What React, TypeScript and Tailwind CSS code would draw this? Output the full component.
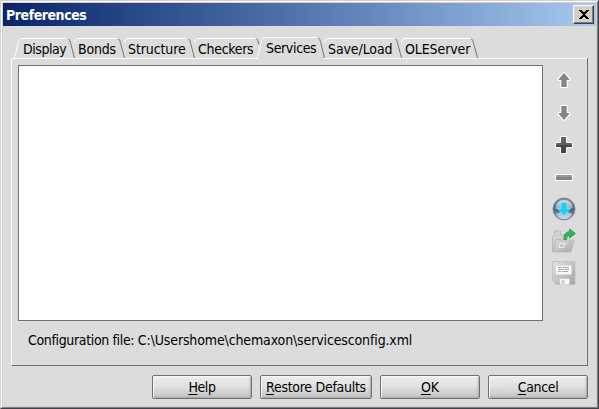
import React from "react";

type Tab = { label: string; width: string; tracking: string; size: number };

const tabs: Tab[] = [
  { label: "Display", width: "w-[55px]", tracking: "tracking-[-0.45px]", size: 55 },
  { label: "Bonds", width: "w-[50px]", tracking: "tracking-[-0.2px]", size: 50 },
  { label: "Structure", width: "w-[70px]", tracking: "tracking-[-0.1px]", size: 70 },
  { label: "Checkers", width: "w-[68px]", tracking: "tracking-[-0.3px]", size: 68 },
  { label: "Services", width: "w-[62px]", tracking: "tracking-[-0.35px]", size: 62 },
  { label: "Save/Load", width: "w-[77px]", tracking: "tracking-[-0.1px]", size: 77 },
  { label: "OLEServer", width: "w-[76px]", tracking: "tracking-[-0.1px]", size: 76 },
];

function TabItem({ tab, index }: { tab: Tab; index: number }) {
  const active = tab.label === "Services";
  const slopedLeft = index === 0 || active;
  const nextIsActive = tabs[index + 1]?.label === "Services";
  const w = tab.size;
  const top = active ? 0.5 : 1.5;
  return (
    <button className={`relative h-[22px] shrink-0 text-left ${tab.width}`}>
      <svg className="absolute left-0 top-0 overflow-visible" width={w} height="22" fill="none">
        <path
          d={
            slopedLeft
              ? `M-.5 21 L.5 17 L3.5 ${top + 3} Q4.5 ${top} 7 ${top} H${w - 2}`
              : `M4.5 ${top + 4} Q5 ${top} 8 ${top} H${w - 2}`
          }
          stroke="#fff"
        />
        <path
          d={
            nextIsActive
              ? `M${w - 2} ${top} Q${w} ${top + 1} ${w + 1} ${top + 6}`
              : `M${w - 2} ${top} Q${w} ${top + 1} ${w + 0.7} ${top + 5} L${w + 4.5} 21`
          }
          stroke="#747474"
        />
      </svg>
      <span className={`relative block whitespace-nowrap pl-2 leading-[22px] ${active ? "pt-0" : "pt-px"} ${tab.tracking}`}>{tab.label}</span>
    </button>
  );
}

function ArrowIcon({ down = false }: { down?: boolean }) {
  return (
    <svg width="14" height="18" viewBox="0 0 14 18" className={down ? "rotate-180" : ""}>
      <path d="M7 1.2 L12.8 7.8 V9.5 H10.2 V16.5 H3.8 V9.5 H1.2 V7.8 Z" fill="#858585" stroke="#fff" strokeWidth="1.1" />
    </svg>
  );
}

function PlusIcon() {
  return (
    <svg width="18" height="18" viewBox="0 0 18 18">
      <path d="M5.5 .5 H11.5 V6.5 H17.5 V11.5 H11.5 V17.5 H5.5 V11.5 H.5 V6.5 H5.5 Z" fill="#484848" stroke="#fff" />
      <path d="M6 1 H11 V7 H17 V9 H1 V7 H6 Z" fill="#626262" />
    </svg>
  );
}

function MinusIcon() {
  return (
    <svg width="18" height="7" viewBox="0 0 18 7">
      <rect x=".5" y=".5" width="17" height="6" fill="#858585" stroke="#fff" />
      <path d="M1 1 H17 V3 H1 Z" fill="#999" />
    </svg>
  );
}

function DownloadIcon() {
  return (
    <svg width="24" height="24" viewBox="0 0 24 24">
      <defs>
        <linearGradient id="orb" x1="0" y1="0" x2="0" y2="1">
          <stop offset="0" stopColor="#8592a0" />
          <stop offset=".55" stopColor="#4c6580" />
          <stop offset="1" stopColor="#a9c6d6" />
        </linearGradient>
        <linearGradient id="shine" x1="0" y1="0" x2="0" y2="1">
          <stop offset="0" stopColor="#fff" stopOpacity=".7" />
          <stop offset="1" stopColor="#e4edf4" stopOpacity=".45" />
        </linearGradient>
      </defs>
      <circle cx="12" cy="12" r="11" fill="url(#orb)" stroke="#7c8792" />
      <path d="M3.5 12 Q4 3 12 3 T20.5 11 Q12 14 3.5 12" fill="url(#shine)" />
      <path d="M4 17 Q12 12 20 17 Q17 22 12 22 T4 17" fill="#d9edf5" fillOpacity=".6" />
      <path d="M9 5.5 H15 V11.5 H18.5 L12 18.5 L5.5 11.5 H9 Z" fill="#1fcdf7" stroke="#8fe2fb" strokeWidth=".7" />
    </svg>
  );
}

function OpenIcon() {
  return (
    <svg width="26" height="26" viewBox="0 0 26 26">
      <defs>
        <linearGradient id="folder" x1="0" y1="0" x2="1" y2="1">
          <stop stopColor="#e2e2e2" />
          <stop offset="1" stopColor="#a6a6a6" />
        </linearGradient>
      </defs>
      <path d="M1.5 24 V8.5 Q1.5 7 3.5 7 V3 H9.5 V7 H14 V12 H5 Z" fill="#d0d0d0" stroke="#b2b2b2" strokeWidth=".8" />
      <path d="M5 12 H23 L20 24 H1.5 Z" fill="url(#folder)" stroke="#b2b2b2" strokeWidth=".7" />
      <path d="M9 15.5 H14 L12.5 19.5 H7.5 Z" fill="#d0d0d0" stroke="#efefef" strokeWidth=".9" />
      <path d="M9.5 17 H12.5 M9 18.5 H11.5" stroke="#aaa" strokeWidth=".6" />
      <path d="M13 11.5 Q12.5 4 18.5 3.5 V1 L24.5 5.5 L18.5 10 V7.5 Q15.5 7.5 15.5 11.5 Z" fill="#2eb553" stroke="#139c3a" strokeWidth=".7" />
    </svg>
  );
}

function SaveIcon() {
  return (
    <svg width="24" height="24" viewBox="0 0 24 24">
      <defs>
        <linearGradient id="disk" x1="0" y1="0" x2="1" y2="1">
          <stop stopColor="#e0e0e0" />
          <stop offset=".5" stopColor="#c4c4c4" />
          <stop offset="1" stopColor="#a4a4a4" />
        </linearGradient>
      </defs>
      <path d="M1 .5 H23 V23.5 H4.5 L.5 19.5 V1 Z" fill="url(#disk)" stroke="#b5b5b5" strokeWidth=".6" />
      <path d="M4 4.5 H19.5 V13.5 H4 Z" fill="#f8f8f8" />
      <path d="M6 6.5 H10 M11 6.5 H17 M6 8.5 H12 M13 8.5 H17 M6 10.5 H9 M10 10.5 H16" stroke="#a8a8a8" />
      <path d="M7 17 H18 V23 H7 Z" fill="#cacaca" />
      <path d="M8 18 H17 V23.5 H8 Z" fill="#f7f7f7" />
      <path d="M9.5 19 H12.5 V23 H9.5 Z" fill="#cfcfcf" />
    </svg>
  );
}

function DialogButton({ label, className }: { label: string; className: string }) {
  return (
    <button
      className={`h-6 rounded-[2px] border border-[#707070] bg-linear-to-b from-[#eeeeee] via-[#e0e0e0] to-[#c2c2c2] text-center leading-[22px] shadow-[inset_1px_1px_1px_#f7f7f7,inset_-1px_-1px_2px_#aaa] ${className}`}
    >
      <span className="underline decoration-1 underline-offset-2">{label[0]}</span>
      {label.slice(1)}
    </button>
  );
}

export default function App() {
  return (
    <main className="flex h-[409px] w-[599px] flex-col border border-b-[#424048] border-l-[#d4d0c8] border-r-[#424048] border-t-[#d4d0c8] bg-[#dcdcdc] font-['DejaVu_Sans_Condensed','DejaVu_Sans',sans-serif] text-[14px] text-black [font-stretch:condensed]">
      <div className="flex min-h-0 flex-1 flex-col border border-b-[#808080] border-l-white border-r-[#808080] border-t-white">
        <div className="flex min-h-0 flex-1 flex-col border border-[#d4d0c8]">
          <header className="flex h-[23px] shrink-0 items-center justify-between bg-linear-to-r from-[#0a246a] to-[#a6caf0] pl-[3px] pr-[2px] text-white">
            <h1 className="pt-px font-bold leading-[22px] tracking-[-0.45px]">Preferences</h1>
            <button aria-label="Close" className="flex h-[19px] w-[21px] items-center justify-center border border-b-[#404040] border-l-white border-r-[#404040] border-t-white bg-[#d4d0c8] shadow-[inset_-1px_-1px_0_#808080]">
              <svg width="10" height="9" viewBox="0 0 10 9" shapeRendering="crispEdges">
                <path d="M0 0h3v1h1v1h2V1h1V0h3v1H9v1H8v1H7v1H6v1h1v1h1v1h1v1h1v1H7V8H6V7H4v1H3v1H0V8h1V7h1V6h1V5h1V4H3V3H2V2H1V1H0Z" fill="#000" />
              </svg>
            </button>
          </header>
          <div className="flex flex-1 flex-col pl-2 pr-2 pt-[11px]">
            <nav className="flex h-[21px] shrink-0 pl-1">
              {tabs.map((tab, index) => <TabItem key={tab.label} tab={tab} index={index} />)}
            </nav>
            <section className="flex h-[308px] shrink-0 flex-col border-b border-l border-r border-b-[#707070] border-l-white border-r-[#707070]">
              <div className="flex h-px shrink-0 justify-between">
                <div className="w-[246px] bg-white" />
                <div className="w-[263px] bg-white" />
              </div>
              <div className="flex pl-[6px] pt-[6px]">
                <div className="h-[256px] w-[525px] border border-[#707070] bg-white" />
                <aside className="flex w-[42px] flex-col items-center">
                  <div className="mt-[6px] h-[33px]"><ArrowIcon /></div>
                  <div className="h-[32px]"><ArrowIcon down /></div>
                  <div className="h-[35px]"><PlusIcon /></div>
                  <div className="h-[23px] pt-[3px]"><MinusIcon /></div>
                  <div className="h-[33px] pt-[3px]"><DownloadIcon /></div>
                  <div className="h-[34px] pt-px"><OpenIcon /></div>
                  <SaveIcon />
                </aside>
              </div>
              <p className="pl-4 pt-[8px] leading-[22px] tracking-[-0.13px]">
                <span className="tracking-[-0.35px]">Configuration file: </span>C:\Usershome\chemaxon\servicesconfig.xml
              </p>
            </section>
            <footer className="flex justify-end gap-2 pt-[9px]">
              <DialogButton label="Help" className="w-[100px] tracking-[-0.4px]" />
              <DialogButton label="Restore Defaults" className="w-[112px] tracking-[-0.28px]" />
              <DialogButton label="OK" className="w-[100px]" />
              <DialogButton label="Cancel" className="w-[100px] tracking-[-0.35px]" />
            </footer>
          </div>
        </div>
      </div>
    </main>
  );
}
